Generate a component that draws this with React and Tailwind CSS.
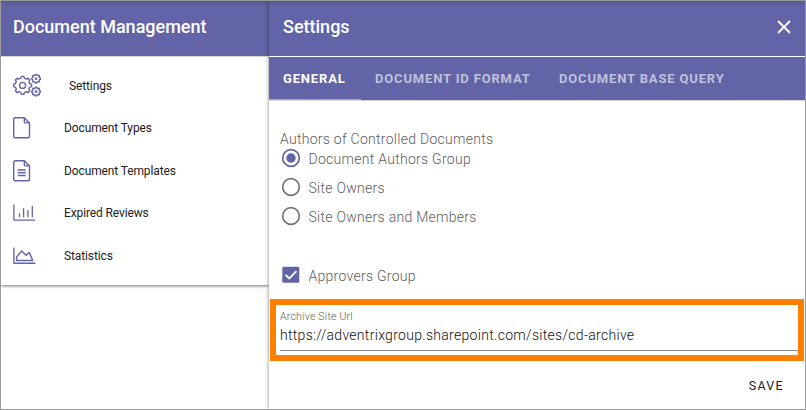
function gearPath(cx, cy, outer, inner, teeth) {
  const step = (Math.PI * 2) / teeth;
  const points = [];
  for (let i = 0; i < teeth; i++) {
    const a = i * step - Math.PI / 2;
    for (const [offset, r] of [[-0.29, inner], [-0.18, outer], [0.18, outer], [0.29, inner]]) {
      const t = a + offset * step;
      points.push(`${(cx + r * Math.cos(t)).toFixed(2)} ${(cy + r * Math.sin(t)).toFixed(2)}`);
    }
  }
  return `M${points.join("L")}z`;
}

function GearsIcon() {
  return (
    <svg width="30" height="26" viewBox="0 0 30 26" fill="none" stroke="#6264a7" strokeWidth="1.4" strokeLinejoin="round">
      <path d={gearPath(9.6, 12.4, 9.1, 7.4, 8)} />
      <circle cx="9.600" cy="12.400" r="3" />
      <path d={gearPath(23.1, 5.7, 4.4, 3.6, 8)} strokeWidth="1.300" />
      <circle cx="23.100" cy="5.700" r="1.300" fill="#6264a7" stroke="none" />
      <path d={gearPath(23.1, 18.6, 4.4, 3.6, 8)} strokeWidth="1.300" />
      <circle cx="23.100" cy="18.600" r="1.300" fill="#6264a7" stroke="none" />
    </svg>
  );
}

function PageIcon({ lined }) {
  return (
    <svg width="24" height="24" viewBox="0 0 24 24" fill="none" stroke="#6264a7" strokeWidth="1.4" strokeLinejoin="round">
      <path d="M2.200 1.700H11.300L16.500 6.900V20.300a1.500 1.500 0 0 1-1.500 1.500H2.200a1.500 1.500 0 0 1-1.500-1.500V3.200a1.500 1.500 0 0 1 1.500-1.500z" />
      <path d="M11.300 1.700V5.400a1.500 1.500 0 0 0 1.500 1.500h3.700" />
      {lined && <path d="M4.700 11h8M4.700 13.700h8M4.700 16.500h8" />}
    </svg>
  );
}

function BarsIcon() {
  return (
    <svg width="24" height="24" viewBox="0 0 24 24" fill="none" stroke="#6264a7" strokeWidth="1.3">
      <path d="M.9 3.500v15.700H22.300M6.500 16.200v-4M10.600 16.200V7.200M14.900 16.200V9M19.300 16.200V5" />
    </svg>
  );
}

function AreaIcon() {
  return (
    <svg width="24" height="24" viewBox="0 0 24 24" fill="none" stroke="#6264a7" strokeWidth="1.4" strokeLinejoin="round">
      <path d="M.9 3.500v15.700H22.300M3.600 16.500V13L8.600 7l4.500 4.200L16.300 8.500l3.500 8z" />
    </svg>
  );
}

function MenuItem({ icon, label, indent }) {
  return (
    <li className="flex h-[42.5px] items-center pl-3">
      <span className={indent ? "flex w-[56px]" : "flex w-[51px]"}>{icon}</span>
      <span className="text-[12px] leading-4 tracking-[-0.12px] text-[#1d1d1d]">{label}</span>
    </li>
  );
}

function Radio({ label, checked }) {
  return (
    <label className="flex h-[29px] items-center">
      <svg width="20" height="20" viewBox="0 0 20 20" fill="none" className="mr-[7.5px]">
        <circle cx="10" cy="10" r="8.300" stroke={checked ? "#6264a7" : "#757575"} strokeWidth="1.700" />
        {checked && <circle cx="10" cy="10" r="4.700" fill="#6264a7" />}
      </svg>
      <span className="pt-[2px] text-[14px] leading-5 font-light tracking-[0.28px]">{label}</span>
    </label>
  );
}

export default function App() {
  return (
    <div className="flex h-[410px] w-[806px] overflow-hidden border border-[#9b9b9b] bg-white font-['Roboto',sans-serif] text-[#5c5c5c]">
      <aside className="h-[284px] w-[268px] shrink-0 bg-white shadow-[0_1px_3px_rgba(0,0,0,0.55)]">
        <header className="flex h-[55px] items-center bg-linear-to-b from-[#575994] to-[#6264a7] to-[6px] pl-3 pb-[4px] text-[18px] text-white">
          <h1 className="font-medium">Document Management</h1>
        </header>
        <ul className="border-t border-[#d6d6d6] pt-[7.5px]">
          <MenuItem icon={<GearsIcon />} label="Settings" indent />
          <MenuItem icon={<PageIcon />} label="Document Types" />
          <MenuItem icon={<PageIcon lined />} label="Document Templates" />
          <MenuItem icon={<BarsIcon />} label="Expired Reviews" />
          <MenuItem icon={<AreaIcon />} label="Statistics" />
        </ul>
      </aside>

      <main className="flex flex-1 flex-col bg-white shadow-[0_0_4px_rgba(0,0,0,0.5)]">
        <header className="flex h-[55px] shrink-0 items-center justify-between bg-linear-to-b from-[#575994] to-[#6264a7] to-[6px] pr-[14px] pb-[4px] pl-[14px] text-white">
          <h2 className="text-[18px] font-medium">Settings</h2>
          <svg width="14" height="14" viewBox="0 0 14 14" stroke="white" strokeWidth="1.900">
            <path d="M1 1l12 12M13 1L1 13" />
          </svg>
        </header>
        <nav className="mt-px flex h-[44px] shrink-0 border-b border-[#d6d6d6] bg-[#6264a7] text-[13px] font-bold tracking-[0.84px] text-white/60">
          <span className="flex w-[92px] items-center border-b border-[#a3a0dc] pt-px pl-[14px] text-white">GENERAL</span>
          <span className="flex w-[184px] items-center pl-[14px]">DOCUMENT ID FORMAT</span>
          <span className="flex items-center pl-[14px]">DOCUMENT BASE QUERY</span>
        </nav>

        <section className="flex flex-1 flex-col pt-[28px]">
          <div className="pl-[11px]">
            <p className="h-[14px] text-[14px] leading-5 font-light tracking-[0.28px]">Authors of Controlled Documents</p>
            <div className="pl-px">
              <Radio label="Document Authors Group" checked />
              <Radio label="Site Owners" />
              <Radio label="Site Owners and Members" />
              <label className="mt-[30px] flex h-[30px] items-center">
                <svg width="20" height="20" viewBox="0 0 20 20" className="mr-[7.5px]">
                  <rect x="1.300" y="1.700" width="17" height="16" rx="1.500" fill="#6264a7" />
                  <path d="M4.500 9.800l3.700 3.700 7.300-7.300" fill="none" stroke="white" strokeWidth="1.800" />
                </svg>
                <span className="pt-[2px] text-[14px] leading-5 font-light tracking-[0.28px]">Approvers Group</span>
              </label>
            </div>
          </div>

          <div className="mt-[9px] ml-[1px] h-[62px] w-[534px] border-[6px] border-[#ff8000] pt-[4px] pl-[4px]">
            <p className="text-[10.500px] leading-[15px] font-light tracking-[0.23px]">Archive Site Url</p>
            <div className="h-[27px] border-b border-[#858585] text-[14px] leading-[23px] font-light tracking-[0.3px] text-[#111]">
              https://adventrixgroup.sharepoint.com/sites/cd-archive
            </div>
          </div>

          <footer className="mt-[16px] flex justify-end pr-[21px]">
            <button className="text-[12.500px] leading-[18px] tracking-[1.300px] text-[#222]">SAVE</button>
          </footer>
        </section>
      </main>
    </div>
  );
}
